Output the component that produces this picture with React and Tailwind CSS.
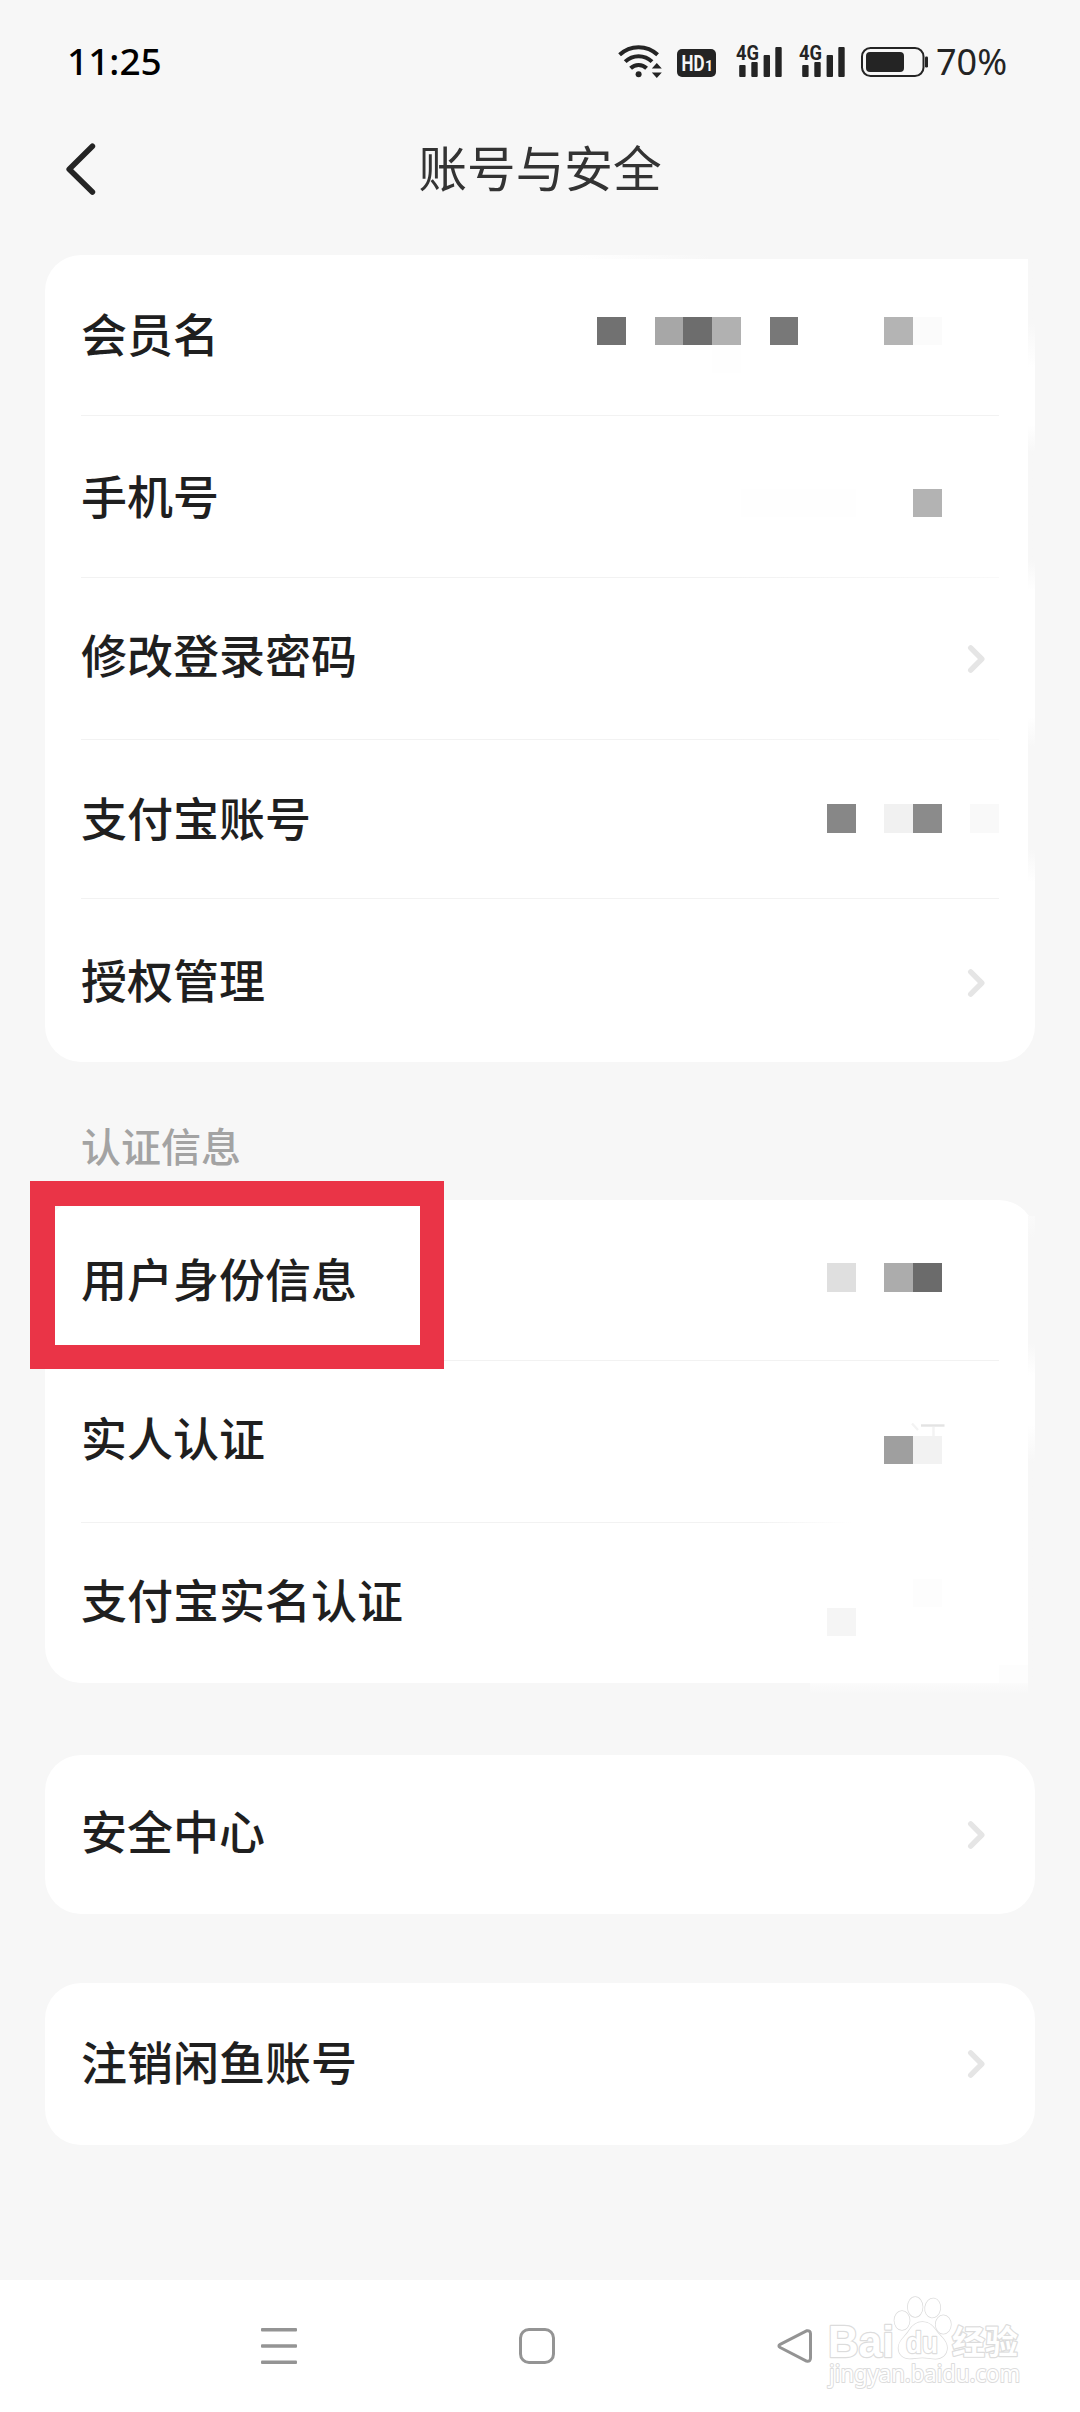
import React from 'react';
import clsx from 'clsx';

const ACCOUNT_ROWS = [
  { label: '会员名', size: 'h-[161px]', nudge: '-mt-[6px]', line: 'bg-[#f2f2f2]' },
  { label: '手机号', size: 'h-[162px]', nudge: '-mt-[5px]', line: 'bg-linear-to-r from-[#f2f2f2] from-70% to-[#f9f9f9]' },
  { label: '修改登录密码', size: 'h-[162px]', nudge: '-mt-[11px]', arrow: true, line: 'bg-linear-to-r from-[#f2f2f2] from-70% to-[#fbfbfb]' },
  { label: '支付宝账号', size: 'h-[159px]', nudge: '-mt-[7px]', line: 'bg-[#f2f2f2]' },
  { label: '授权管理', size: 'h-[163px] pt-1', nudge: '-mt-[9px]', arrow: true },
];

const VERIFY_ROWS = [
  { label: '用户身份信息', size: 'h-[161px]', nudge: '-mt-[6px]', line: 'bg-[#f2f2f2]' },
  { label: '实人认证', size: 'h-[162px]', nudge: '-mt-[11px]', line: 'bg-linear-to-r from-[#f2f2f2] from-74% to-white to-84%' },
  { label: '支付宝实名认证', size: 'h-[160px]', nudge: '-mt-[10px]' },
];

// Masked values: blocks placed relative to the card's top-left corner
const ACCOUNT_BLOCKS = [
  'left-[552px] top-[62px] w-[29px] h-[28px] bg-[#717171]',
  'left-[610px] top-[62px] w-[28px] h-[28px] bg-[#a7a7a7]',
  'left-[638px] top-[62px] w-[29px] h-[28px] bg-[#6d6d6d]',
  'left-[667px] top-[62px] w-[29px] h-[28px] bg-[#b1b1b1]',
  'left-[667px] top-[90px] w-[29px] h-[28px] bg-[#fefefe]',
  'left-[725px] top-[62px] w-[28px] h-[28px] bg-[#787878]',
  'left-[839px] top-[62px] w-[29px] h-[28px] bg-[#b4b4b4]',
  'left-[868px] top-[62px] w-[29px] h-[28px] bg-[#fbfbfb]',
  'left-[696px] top-[234px] w-[115px] h-[28px] bg-[#fefefe]',
  'left-[868px] top-[234px] w-[29px] h-[28px] bg-[#b3b3b3]',
  'left-[782px] top-[549px] w-[29px] h-[29px] bg-[#878787]',
  'left-[839px] top-[549px] w-[29px] h-[29px] bg-[#f1f1f1]',
  'left-[868px] top-[549px] w-[29px] h-[29px] bg-[#8b8b8b]',
  'left-[925px] top-[549px] w-[29px] h-[29px] bg-[#f9f9f9]',
  // worn top and right edges
  'left-[530px] top-0 w-[453px] h-[4px] bg-linear-to-r from-white to-[#f7f7f7] to-30%',
  'left-[983px] top-0 w-[7px] h-[112px] bg-linear-to-b from-[#f7f7f7] from-60% to-white',
  'left-[983px] top-[170px] w-[7px] h-[135px] bg-linear-to-b from-white to-[#f7f7f7] to-20%',
  'left-[983px] top-[305px] w-[7px] h-[30px] bg-linear-to-b from-[#f7f7f7] to-white',
  'left-[983px] top-[462px] w-[7px] h-[165px] bg-[linear-gradient(to_bottom,#fff,#f7f7f7_18%,#f7f7f7_80%,#fff)]',
];

const VERIFY_BLOCKS = [
  'left-[782px] top-[63px] w-[29px] h-[29px] bg-[#dfdfdf]',
  'left-[839px] top-[63px] w-[29px] h-[29px] bg-[#acacac]',
  'left-[868px] top-[63px] w-[29px] h-[29px] bg-[#6b6b6b]',
  'left-[839px] top-[236px] w-[29px] h-[28px] bg-[#9f9f9f]',
  'left-[868px] top-[236px] w-[29px] h-[28px] bg-[#f2f2f2]',
  'left-[868px] top-[379px] w-[29px] h-[28px] bg-[#fdfdfd]',
  'left-[782px] top-[408px] w-[29px] h-[28px] bg-[#f5f5f5]',
  // worn right and bottom edges
  'left-[983px] top-[16px] w-[7px] h-[159px] bg-[linear-gradient(to_bottom,#fafafa,#f7f7f7_14%,#f7f7f7_80%,#fff)]',
  'left-[983px] top-[225px] w-[7px] h-[258px] bg-linear-to-b from-white to-[#f7f7f7] to-14%',
  'left-[954px] top-[465px] w-[29px] h-[18px] bg-[#fdfdfd]',
  'left-[765px] top-[483px] w-[218px] h-[11px] bg-linear-to-b from-[#fbfbfb] to-[#f7f7f7]',
];

function Chevron() {
  return (
    <svg className="mr-[13px] h-[30px] w-[19px]" viewBox="0 0 19 30" fill="none" stroke="#e5e5e5" strokeWidth="5.4" strokeLinecap="round" strokeLinejoin="round">
      <path d="M3.7 3.8 14.8 15 3.7 26.2" />
    </svg>
  );
}

function Row({ label, size, nudge, arrow, line }) {
  return (
    <div className={clsx('flex flex-col', size)}>
      <div className="flex flex-1 items-center justify-between">
        <span className={clsx('text-[46px] leading-[60px] font-medium text-[#1f1f1f]', nudge)}>{label}</span>
        {arrow && <Chevron />}
      </div>
      {line && <div className={clsx('h-px', line)} />}
    </div>
  );
}

function Card({ rows, blocks = [], className, children }) {
  return (
    <section className={clsx('relative mx-[45px] bg-white px-9', className)}>
      {rows.map((row) => <Row key={row.label} {...row} />)}
      {blocks.map((block) => <i key={block} className={clsx('absolute', block)} />)}
      {children}
    </section>
  );
}

function WifiIcon() {
  return (
    <svg className="-mt-[2px] h-[34px] w-[45px]" viewBox="0 0 45 34" fill="none" stroke="#242424" strokeWidth="4">
      <path d="M1.6 10.8a27.5 27.5 0 0 1 38 0" />
      <path d="M7.2 17.6a19.2 19.2 0 0 1 26.8 0" />
      <path d="M12.6 24.2a11.5 11.5 0 0 1 16 0" />
      <circle cx="20.6" cy="30.2" r="3" fill="#242424" stroke="none" />
      <path d="m33.8 24.6 5-5.6 5 5.6zM33.8 28.4l5 5.6 5-5.6z" fill="#242424" stroke="none" />
    </svg>
  );
}

function SignalIcon({ className }) {
  return (
    <svg className={clsx('-mt-[2px] h-[34px] w-[47px] overflow-visible', className)} viewBox="0 0 47 34" fill="#242424">
      <text x="0" y="16.2" fontFamily="Roboto" fontSize="21" fontWeight="700" textLength="23" lengthAdjust="spacingAndGlyphs">4G</text>
      <rect x="3.2" y="21" width="6.4" height="12" rx="1" />
      <rect x="15.3" y="18" width="6.4" height="15" rx="1" />
      <rect x="27.6" y="11" width="6.4" height="22" rx="1" />
      <rect x="39.3" y="3" width="6.4" height="30" rx="1" />
    </svg>
  );
}

function BatteryIcon() {
  return (
    <svg className="ml-[15px] h-[30px] w-[67px]" viewBox="0 0 67 30" fill="#242424">
      <rect x="1" y="1" width="61.5" height="28" rx="8.5" fill="none" stroke="#242424" strokeWidth="2" />
      <rect x="5" y="5" width="38" height="20" rx="4" />
      <rect x="64" y="9.5" width="3" height="11" rx="1.2" />
    </svg>
  );
}

function StatusBar() {
  return (
    <div className="flex h-[124px] items-center pr-[71px] pl-[67px] font-['Noto_Sans',sans-serif]">
      <span className="-mt-[3px] text-[37px] leading-none font-medium text-black">11:25</span>
      <div className="ml-auto flex items-center text-[#242424]">
        <WifiIcon />
        <svg className="mt-[2px] ml-[14px] h-[28px] w-[39px]" viewBox="0 0 39 28">
          <rect width="39" height="28" rx="5" fill="#242424" />
          <text x="4.5" y="21.8" fill="#f7f7f7" fontFamily="Roboto" fontSize="22" fontWeight="700" textLength="23" lengthAdjust="spacingAndGlyphs">HD</text>
          <text x="28" y="21.8" fill="#f7f7f7" fontFamily="Roboto" fontSize="14" fontWeight="700">1</text>
        </svg>
        <SignalIcon className="ml-[20px]" />
        <SignalIcon className="ml-[16px]" />
        <BatteryIcon />
        <span className="ml-[8px] w-[73px] text-[36px] leading-none">70%</span>
      </div>
    </div>
  );
}

function Header() {
  return (
    <header className="grid h-[131px] grid-cols-3 items-start">
      <svg className="mt-[18px] ml-[65px] h-[54px] w-[32px]" viewBox="0 0 32 54" fill="none" stroke="#242424" strokeWidth="5.6" strokeLinecap="round" strokeLinejoin="round">
        <path d="M27.4 4.2 4.2 27.2 27.4 50" />
      </svg>
      <h1 className="mt-[9px] text-center text-[48.6px] leading-[66px] whitespace-nowrap text-[#333]">账号与安全</h1>
    </header>
  );
}

function Watermark() {
  return (
    <svg className="absolute top-[10px] left-[820px] h-[120px] w-[210px]" viewBox="0 0 210 120" fill="#fff" stroke="#dcdcdc" strokeWidth="2.4" strokeLinejoin="round" paintOrder="stroke">
      <text x="8" y="66.5" fontFamily="Liberation Sans" fontSize="44" fontWeight="700" textLength="66" lengthAdjust="spacingAndGlyphs">Bai</text>
      <g strokeWidth="1.5">
        <ellipse cx="82" cy="30.5" rx="7.6" ry="9.6" />
        <ellipse cx="95.2" cy="17" rx="7.4" ry="10" />
        <ellipse cx="112.7" cy="18" rx="7.6" ry="9.6" transform="rotate(8 112.7 18)" />
        <ellipse cx="123.3" cy="34.5" rx="7.6" ry="9.2" />
        <path d="M102.5 32c-7 0-11 4.5-14 9.500-3.500 5.500-10 9-10 16.500 0 6.500 5 10.500 11 10.500 5 0 8-1 13-1s8 1.200 13 1.200c6 0 11.500-4 11.500-11 0-7.500-6.500-11-10.500-16.500-3.500-5-7-9.200-14-9.200Z" />
      </g>
      <text x="86" y="62.5" fontFamily="Liberation Sans" fontSize="30" fontWeight="700" textLength="32" lengthAdjust="spacingAndGlyphs">du</text>
      <text x="132" y="64" fontFamily="Noto Sans CJK SC" fontSize="33" fontWeight="700">经验</text>
      <text x="9" y="91.5" fontFamily="Noto Sans" fontSize="23" strokeWidth="2" textLength="191" lengthAdjust="spacingAndGlyphs">jingyan.baidu.com</text>
    </svg>
  );
}

function NavBar() {
  return (
    <nav className="relative mt-auto flex h-[132px] items-center bg-white">
      <svg className="ml-[261px] h-[36px] w-[36px]" viewBox="0 0 36 36" fill="#949494">
        <rect width="36" height="3.4" rx="1" />
        <rect y="16.3" width="36" height="3.4" rx="1" />
        <rect y="32.6" width="36" height="3.4" rx="1" />
      </svg>
      <div className="ml-[222px] h-[36px] w-[36px] rounded-[10px] border-3 border-[#949494]" />
      <svg className="ml-[222px] h-[36px] w-[36px]" viewBox="0 0 36 36" fill="none" stroke="#949494" strokeWidth="3" strokeLinejoin="round">
        <path d="M29.5 2.8 3.2 16.3q-2.6 1.6 0 3.2l26.300 13.600q4 .8 4-3V5.800q0-3.600-4-3Z" />
      </svg>
      <Watermark />
    </nav>
  );
}

export default function App() {
  return (
    <div className="flex h-[2412px] w-[1080px] flex-col overflow-hidden bg-[#f7f7f7] font-['Noto_Sans_CJK_SC',sans-serif]">
      <StatusBar />
      <Header />
      <Card rows={ACCOUNT_ROWS} blocks={ACCOUNT_BLOCKS} className="rounded-[36px] rounded-tr-none" />

      <div className="h-[138px] pt-[53px] pl-[81px] text-[40px] leading-[60px] font-medium text-[#a3a3a3]">认证信息</div>
      <Card rows={VERIFY_ROWS} blocks={VERIFY_BLOCKS} className="rounded-[36px] rounded-br-none">
        <svg className="absolute top-[222px] left-[864px] h-[14px] w-[38px]" viewBox="0 0 38 14" fill="none" stroke="#e3e3e3" strokeWidth="2.4">
          <path d="M12 3.5h23.500" />
          <path d="M24.5 5v9M3 1.500l6 6.500" stroke="#f3f3f3" />
        </svg>
        <div className="absolute -top-[19px] -left-[15px] h-[188px] w-[414px] border-t-[25px] border-r-[24px] border-b-[24px] border-l-[25px] border-[#ea3447]" />
      </Card>

      <Card rows={[{ label: '安全中心', size: 'h-[159px]', nudge: '-mt-[11px]', arrow: true }]} className="mt-[72px] rounded-[36px]" />
      <Card rows={[{ label: '注销闲鱼账号', size: 'h-[162px]', nudge: '-mt-[9px]', arrow: true }]} className="mt-[69px] rounded-[36px]" />
      <NavBar />
    </div>
  );
}
